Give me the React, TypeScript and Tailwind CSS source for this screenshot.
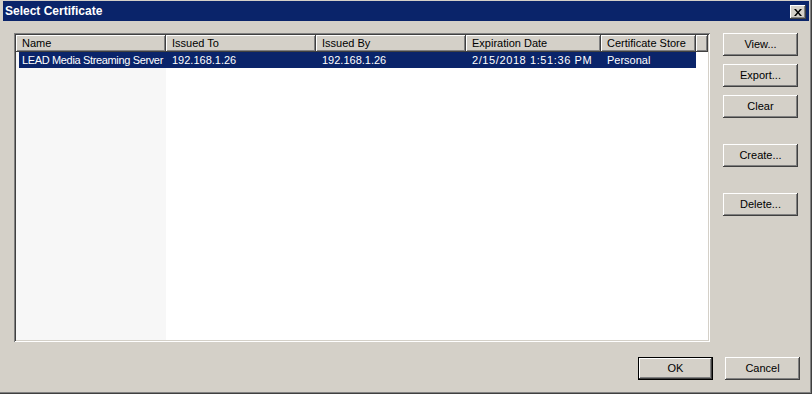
import React from "react";

const font = { fontFamily: '"Liberation Sans", Arial, sans-serif' };

function Btn({ label, def = false }: { label: string; def?: boolean }) {
  return (
    <div
      className={
        "w-[75px] h-[23px] flex items-center justify-center text-[11px] text-black bg-[#d4d0c8] " +
        (def
          ? "border border-black shadow-[inset_-1px_-1px_#404040,inset_1px_1px_#ffffff,inset_-2px_-2px_#808080]"
          : "shadow-[inset_-1px_-1px_#404040,inset_1px_1px_#ffffff,inset_-2px_-2px_#808080]")
      }
    >
      {label}
    </div>
  );
}

const cols = [
  { label: "Name", w: "w-[150px]" },
  { label: "Issued To", w: "w-[150px]" },
  { label: "Issued By", w: "w-[150px]" },
  { label: "Expiration Date", w: "w-[135px]" },
  { label: "Certificate Store", w: "w-[95px]" },
];

const row = [
  { t: "LEAD Media Streaming Server", cls: "w-[147px] pl-[3px] tracking-[-0.35px]" },
  { t: "192.168.1.26", cls: "w-[150px] pl-[6px]" },
  { t: "192.168.1.26", cls: "w-[150px] pl-[6px]" },
  { t: "2/15/2018 1:51:36 PM", cls: "w-[135px] pl-[6px] tracking-[0.6px]" },
  { t: "Personal", cls: "w-[95px] pl-[6px]" },
];

export default function App() {
  return (
    <div
      style={font}
      className="w-[812px] h-[394px] bg-[#d4d0c8] pt-[1px] px-[3px] flex flex-col shadow-[inset_-1px_-1px_#404040,inset_-2px_-2px_#808080] overflow-hidden"
    >
      <div className="h-[20px] bg-[#0a246a] flex items-center justify-between pl-[2px] pr-[3px] shrink-0">
        <span className="text-white font-bold text-[12px] leading-none">Select Certificate</span>
        <div className="w-[16px] h-[14px] bg-[#d4d0c8] flex items-center justify-center shadow-[inset_-1px_-1px_#404040,inset_1px_1px_#ffffff,inset_-2px_-2px_#808080] mt-[4px] mb-[2px]">
          <svg width="8" height="7" viewBox="0 0 8 7">
            <path d="M0 0h2l2 2.5 2-2.5h2L5 3.5 8 7H6L4 4.5 2 7H0l3-3.5z" fill="#000" />
          </svg>
        </div>
      </div>
      <div className="flex pl-[11px] pt-[12px]">
        <div className="w-[696px] h-[309px] bg-white p-[2px] shadow-[inset_1px_1px_#808080,inset_-1px_-1px_#ffffff,inset_2px_2px_#404040,inset_-2px_-2px_#d4d0c8] flex flex-col">
          <div className="flex h-[17px] shrink-0">
            {cols.map((c) => (
              <div
                key={c.label}
                className={
                  c.w +
                  " h-[17px] bg-[#d4d0c8] text-[11px] text-black pl-[6px] flex items-center shadow-[inset_-1px_-1px_#404040,inset_1px_1px_#ffffff,inset_-2px_-2px_#808080]"
                }
              >
                {c.label}
              </div>
            ))}
            <div className="w-[12px] h-[17px] bg-[#d4d0c8] shadow-[inset_-1px_-1px_#404040,inset_1px_1px_#ffffff,inset_-2px_-2px_#808080]" />
          </div>
          <div className="flex-1 bg-[linear-gradient(to_right,#f7f7f7_150px,#ffffff_150px)]">
            <div className="pl-[3px] h-[16px] flex">
              <div className="w-[677px] h-[16px] bg-[#0a246a] flex text-white text-[11px]">
                {row.map((c, i) => (
                  <div key={i} className={c.cls + " flex items-center whitespace-nowrap overflow-hidden"}>
                    {c.t}
                  </div>
                ))}
              </div>
            </div>
          </div>
        </div>
        <div className="ml-[13px] flex flex-col">
          <Btn label="View..." />
          <div className="h-[8px]" />
          <Btn label="Export..." />
          <div className="h-[8px]" />
          <Btn label="Clear" />
          <div className="h-[26px]" />
          <Btn label="Create..." />
          <div className="h-[26px]" />
          <Btn label="Delete..." />
        </div>
      </div>
      <div className="flex justify-end pr-[9px] pt-[15px] gap-[12px]">
        <Btn label="OK" def />
        <Btn label="Cancel" />
      </div>
    </div>
  );
}
